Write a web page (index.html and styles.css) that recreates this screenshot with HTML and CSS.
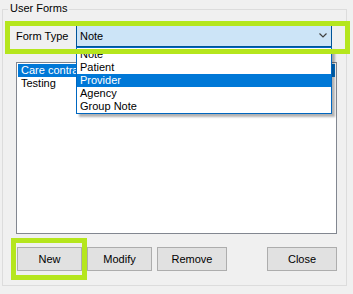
FILE: index.html
```html
<!DOCTYPE html>
<html lang="en">
<head>
    <meta charset="UTF-8">
    <title>User Forms</title>
    <link rel="stylesheet" href="styles.css">
</head>
<body>
    <div class="window">
        <div class="group">
            <span class="group-title">User Forms</span>

            <!-- form type picker, opened -->
            <div class="type-row">
                <label class="type-label">Form Type</label>
                <div class="combo">
                    <span class="combo-value">Note</span>
                    <svg class="chevron" width="8" height="5" viewBox="0 0 8 5">
                        <polyline points="0.5,0.5 4,4 7.5,0.5" fill="none" stroke="#404040" stroke-width="1.2"/>
                    </svg>
                    <ul class="dropdown">
                        <li>Note</li>
                        <li>Patient</li>
                        <li class="selected">Provider</li>
                        <li>Agency</li>
                        <li>Group Note</li>
                    </ul>
                </div>
            </div>

            <!-- forms -->
            <ul class="form-list">
                <li class="selected">Care contract</li>
                <li>Testing</li>
            </ul>

            <div class="buttons">
                <button class="btn btn-new">New</button>
                <button class="btn">Modify</button>
                <button class="btn btn-wide">Remove</button>
                <button class="btn btn-wide btn-close">Close</button>
            </div>
        </div>

        <!-- highlight marks -->
        <div class="mark mark-type"></div>
        <div class="mark mark-new"></div>
    </div>
</body>
</html>
```

FILE: styles.css
```css
* {
    margin: 0;
    padding: 0;
    box-sizing: border-box;
}

body {
    background: #f0f0f0;
    font-family: "Liberation Sans", Arial, sans-serif;
    font-size: 11px;
    color: #000;
}

.window {
    position: relative;
    width: 353px;
    height: 294px;
    padding: 9px 6px 0 2px;
}

.group {
    position: relative;
    height: 277px;
    border: 1px solid #dcdcdc;
    padding: 0 9px 0 13px;
}

.group-title {
    position: absolute;
    left: 5px;
    top: -9px;
    padding: 0 2px;
    background: #f0f0f0;
    line-height: 14px;
}

/* Form type */
.type-row {
    display: flex;
    align-items: center;
    margin-top: 13px;
    height: 24px;
}

.type-label {
    width: 60px;
    padding-top: 2px;
}

.combo {
    position: relative;
    display: flex;
    align-items: center;
    justify-content: space-between;
    width: 256px;
    height: 24px;
    border: 1px solid #005499;
    background: #cce4f7;
    padding: 2px 4px 0 3px;
}

.chevron {
    display: block;
    margin-top: -1px;
}

.dropdown {
    position: absolute;
    left: -1px;
    top: 23px;
    width: 256px;
    height: 67px;
    list-style: none;
    background: #fff;
    border: 1px solid #0067c0;
    box-shadow: 3px 3px 2px rgba(0, 0, 0, 0.3);
    z-index: 1;
}

.dropdown li {
    height: 13px;
    line-height: 13px;
    padding-left: 3px;
}

.selected {
    background: #0078d7;
    color: #fff;
}

/* List */
.form-list {
    list-style: none;
    margin-top: 15px;
    height: 172px;
    background: #fff;
    border: 1px solid #828790;
    padding: 1px 1px 0 1px;
}

.form-list li {
    height: 13px;
    line-height: 13px;
    padding-left: 3px;
    white-space: nowrap;
}

/* Buttons */
.buttons {
    display: flex;
    gap: 5px;
    margin-top: 13px;
}

.btn {
    width: 65px;
    height: 24px;
    background: #e1e1e1;
    border: 1px solid #adadad;
    font-family: inherit;
    font-size: 11px;
    color: #000;
}

.btn-new {
    margin-left: 1px;
}

.btn-wide {
    width: 70px;
}

.btn-close {
    margin-left: auto;
}

/* highlight marks */
.mark {
    position: absolute;
    border: 5px solid #b5e61d;
    z-index: 2;
}

.mark-type {
    left: 5px;
    top: 21px;
    width: 345px;
    height: 33px;
}

.mark-new {
    left: 11px;
    top: 238px;
    width: 76px;
    height: 42px;
}
```
